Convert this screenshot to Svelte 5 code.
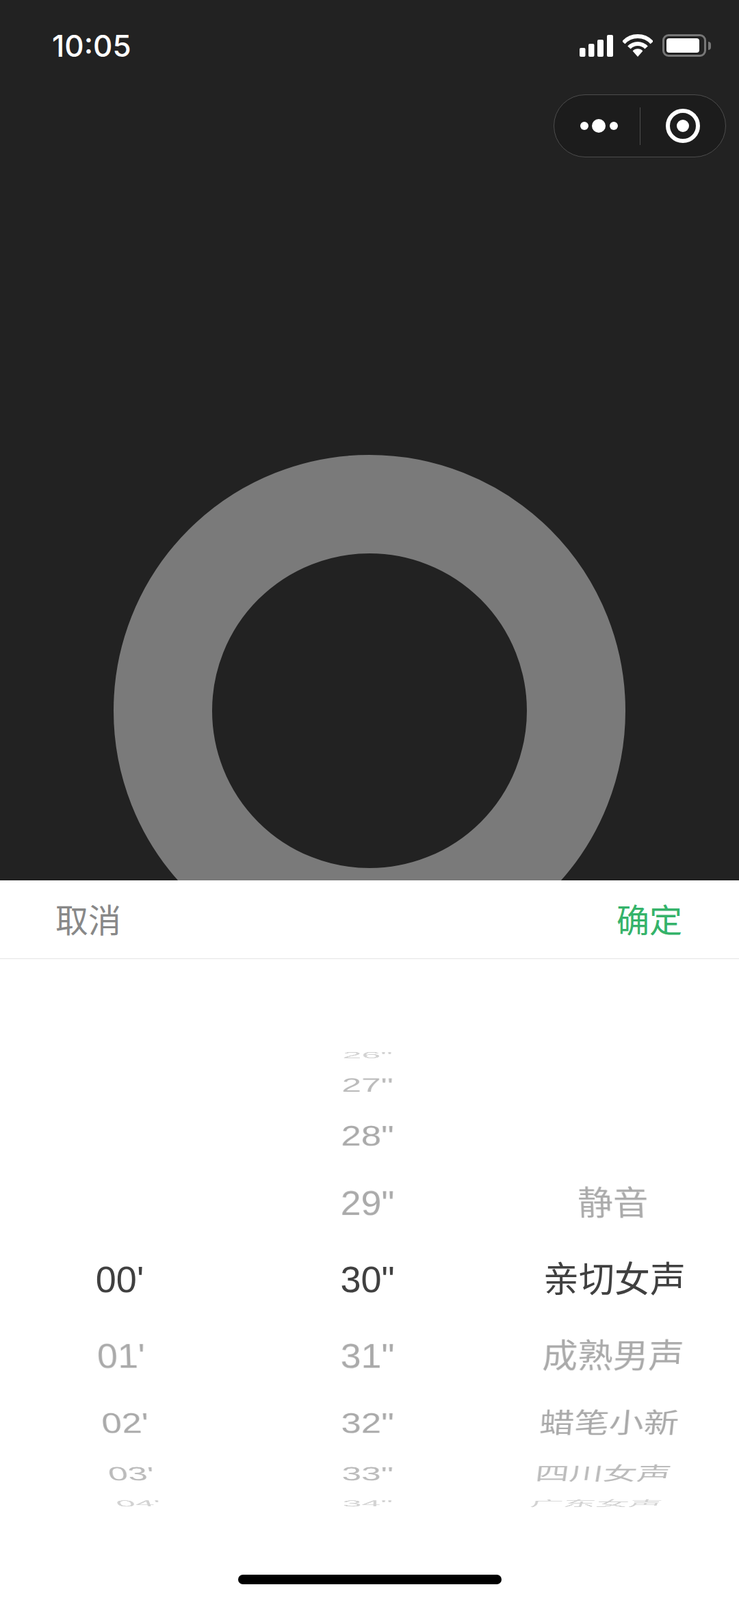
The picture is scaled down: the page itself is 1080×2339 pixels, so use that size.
<script>
	const step = 17.2;
	const radius = 380;

	const columns = [
		{ first: 0, cjk: false, items: ["00'", "01'", "02'", "03'", "04'", "05'"] },
		{ first: -4, cjk: false, items: ['26"', '27"', '28"', '29"', '30"', '31"', '32"', '33"', '34"', '35"'] },
		{ first: -1, cjk: true, items: ['静音', '亲切女声', '成熟男声', '蜡笔小新', '四川女声', '广东女声'] }
	];

	// rows sit on a cylinder, the selected one faces the viewer
	const wheel = (row) =>
		`transform: translateZ(${-radius}px) rotateX(${-row * step}deg) translateZ(${radius}px)`;
</script>

<div class="screen">
	<div class="stage">
		<div class="status">
			<span class="time">10:05</span>
			<div class="status-icons">
				<svg class="signal" width="49" height="32" viewBox="0 0 49 32">
					<rect x="0" y="19" width="8.5" height="13" rx="2" />
					<rect x="13" y="13" width="8.5" height="19" rx="2" />
					<rect x="26" y="7" width="9" height="25" rx="2" />
					<rect x="40" y="0" width="9" height="32" rx="2" />
				</svg>
				<svg class="wifi" width="44" height="33" viewBox="0 0 44 33">
					<path class="arc" d="M1.2 12.3A28 28 0 0 1 42.8 12.3" />
					<path class="arc" d="M9.4 19.6A17 17 0 0 1 34.6 19.6" />
					<path d="M22 33L14.6 24.6A10 10 0 0 1 29.4 24.6Z" />
				</svg>
				<div class="battery"><div class="battery-fill"></div></div>
				<div class="battery-nub"></div>
			</div>
		</div>

		<div class="capsule">
			<svg class="dots" width="56" height="20" viewBox="0 0 56 20">
				<circle cx="6" cy="10" r="6" />
				<circle cx="27" cy="10" r="10" />
				<circle cx="49" cy="10" r="6" />
			</svg>
			<div class="capsule-line"></div>
			<svg class="target" width="50" height="50" viewBox="0 0 50 50">
				<circle class="target-ring" cx="25" cy="25" r="22" />
				<circle cx="25" cy="25" r="9" />
			</svg>
		</div>

		<div class="ring"></div>
	</div>

	<div class="sheet">
		<div class="sheet-head">
			<span class="cancel">取消</span>
			<span class="confirm">确定</span>
		</div>

		<div class="picker">
			{#each columns as col}
				<div class="col" class:cjk={col.cjk}>
					{#each col.items as label, i}
						{@const row = col.first + i}
						<div class="item d{Math.abs(row)}" style={wheel(row)}>{label}</div>
					{/each}
				</div>
			{/each}
		</div>

		<div class="home-bar"></div>
	</div>
</div>

<style>
	:global(body) {
		margin: 0;
		background: #fff;
	}
	.screen {
		width: 1080px;
		height: 2339px;
		overflow: hidden;
		font-family: "Liberation Sans", "Noto Sans CJK SC", sans-serif;
	}
	.stage {
		height: 1287px;
		background: #222;
		overflow: hidden;
		display: flex;
		flex-direction: column;
	}
	.status {
		flex: none;
		display: flex;
		align-items: center;
		justify-content: space-between;
		height: 33px;
		margin-top: 50px;
		padding: 0 41px 0 76px;
	}
	.time {
		font-family: Inter, sans-serif;
		font-weight: 500;
		font-size: 44px;
		color: #fff;
	}
	.status-icons {
		display: flex;
		align-items: center;
	}
	.status-icons svg {
		fill: #fff;
	}
	.signal {
		margin-right: 14px;
	}
	.wifi {
		margin-right: 14px;
	}
	.wifi .arc {
		fill: none;
		stroke: #fff;
		stroke-width: 6;
	}
	.battery {
		box-sizing: border-box;
		width: 64px;
		height: 33px;
		padding: 3px;
		border: 3px solid #777;
		border-radius: 9px;
	}
	.battery-fill {
		width: 48px;
		height: 21px;
		background: #fff;
		border-radius: 4px;
	}
	.battery-nub {
		width: 4px;
		height: 12px;
		margin-left: 3px;
		background: #777;
		border-radius: 0 4px 4px 0;
	}
	.capsule {
		box-sizing: border-box;
		flex: none;
		display: flex;
		align-items: center;
		width: 252px;
		height: 92px;
		margin: 55px 19px 0 auto;
		background: #1c1c1c;
		border: 1px solid #4d4d4d;
		border-radius: 46px;
	}
	.dots {
		margin-left: 38px;
		fill: #fff;
	}
	.capsule-line {
		width: 1px;
		height: 55px;
		margin-left: 31px;
		background: #4d4d4d;
	}
	.target {
		margin-left: 37px;
		fill: #fff;
	}
	.target-ring {
		fill: none;
		stroke: #fff;
		stroke-width: 6;
	}
	.ring {
		box-sizing: border-box;
		flex: none;
		width: 748px;
		height: 748px;
		margin: 435px auto 0;
		border: 144px solid #7a7a7a;
		border-radius: 50%;
	}
	.sheet {
		height: 1052px;
		background: #fff;
	}
	.sheet-head {
		display: flex;
		align-items: center;
		justify-content: space-between;
		height: 114px;
		padding: 0 83px 0 81px;
		border-bottom: 1px solid #e5e5e5;
		font-size: 48px;
	}
	.cancel {
		color: #888;
		margin-top: -5px;
	}
	.confirm {
		color: #35b36a;
		margin-top: -5px;
	}
	.picker {
		display: grid;
		grid-template-columns: 350px 374px 356px;
		height: 676px;
		margin-top: 130px;
		overflow: hidden;
		perspective: 3000px;
		perspective-origin: 540px 338px;
	}
	.col {
		position: relative;
		transform-style: preserve-3d;
	}
	.item {
		position: absolute;
		top: 303px;
		left: 0;
		right: 0;
		height: 70px;
		line-height: 70px;
		text-align: center;
		white-space: nowrap;
		font-size: 54px;
		backface-visibility: hidden;
	}
	.cjk .item {
		right: 8px;
		line-height: 73px;
		font-size: 52px;
	}
	.d0 {
		color: #404040;
	}
	.d1,
	.d2 {
		color: #aaa;
	}
	.d3 {
		color: #bbb;
	}
	.d4 {
		color: #d2d2d2;
	}
	.d5 {
		color: #ddd;
	}
	.home-bar {
		width: 385px;
		height: 14px;
		margin: 94px auto 0;
		background: #000;
		border-radius: 7px;
	}
</style>
